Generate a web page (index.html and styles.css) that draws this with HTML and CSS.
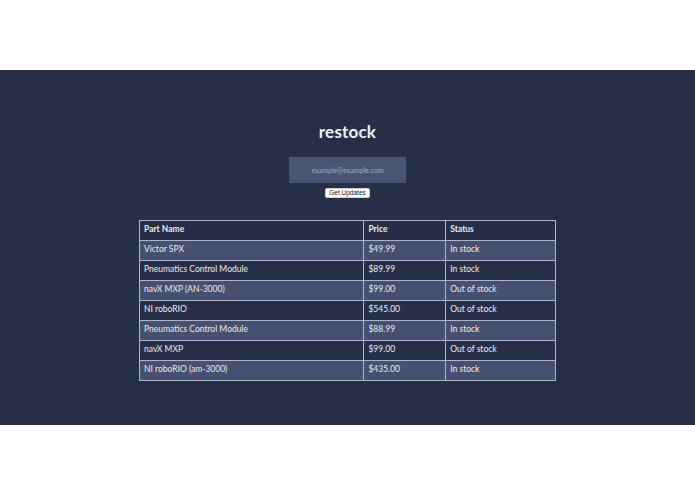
FILE: index.html
```html
<!DOCTYPE html>
<html>
<head>
<meta charset="utf-8">
<link rel="stylesheet" href="styles.css">
</head>
<body>
<div class="spacer"></div>
<main class="panel">
  <h1 class="title">restock</h1>
  <input class="email" type="text" placeholder="example@example.com">
  <button class="btn">Get Updates</button>
  <table class="parts">
    <colgroup><col class="c1"><col class="c2"><col class="c3"></colgroup>
    <thead>
      <tr><th>Part Name</th><th>Price</th><th>Status</th></tr>
    </thead>
    <tbody>
      <tr><td>Victor SPX</td><td>$49.99</td><td>In stock</td></tr>
      <tr><td>Pneumatics Control Module</td><td>$89.99</td><td>In stock</td></tr>
      <tr><td>navX MXP (AN-3000)</td><td>$99.00</td><td>Out of stock</td></tr>
      <tr><td>NI roboRIO</td><td>$545.00</td><td>Out of stock</td></tr>
      <tr><td>Pneumatics Control Module</td><td>$88.99</td><td>In stock</td></tr>
      <tr><td>navX MXP</td><td>$99.00</td><td>Out of stock</td></tr>
      <tr><td>NI roboRIO (am-3000)</td><td>$435.00</td><td>In stock</td></tr>
    </tbody>
  </table>
</main>
</body>
</html>
```
FILE: styles.css
```css
html, body {
  margin: 0;
  padding: 0;
  background: #ffffff;
}
body {
  font-family: Lato, "Open Sans", sans-serif;
}
.spacer {
  height: 70px;
}
.panel {
  height: 355px;
  box-sizing: border-box;
  background: #272f47;
  display: flex;
  flex-direction: column;
  align-items: center;
  padding-top: 51px;
}
.title {
  margin: 0;
  font-size: 17px;
  line-height: 22px;
  font-weight: 700;
  color: #eef0f5;
  letter-spacing: 0.2px;
}
.email {
  margin-top: 14px;
  width: 117px;
  height: 26px;
  box-sizing: border-box;
  border: none;
  background: #4a5573;
  color: #c8cdd9;
  font-family: Lato, sans-serif;
  font-size: 7px;
  text-align: center;
  padding: 0;
  outline: none;
}
.email::placeholder {
  color: #a3aabd;
}
.btn {
  margin-top: 5px;
  width: 45px;
  height: 10px;
  padding: 0;
  border: 1px solid #d0d0d0;
  border-radius: 2px;
  background: #ffffff;
  color: #111;
  font-family: "Liberation Sans", sans-serif;
  font-size: 6.5px;
  line-height: 8px;
}
.parts {
  margin-top: 22px;
  width: 417px;
  border-collapse: collapse;
  color: #e9ebf1;
  font-size: 8.5px;
}
.c1 { width: 225px; }
.c2 { width: 82px; }
.c3 { width: 110px; }
.parts th,
.parts td {
  border: 1px solid #aeb5c6;
  height: 20px;
  padding: 0 4px 3px;
  text-align: left;
  box-sizing: border-box;
}
.parts th {
  font-weight: 700;
  background: #262d45;
}
.parts tbody tr:nth-child(odd) td {
  background: #465070;
}
.parts tbody tr:nth-child(even) td {
  background: #283049;
}
```
